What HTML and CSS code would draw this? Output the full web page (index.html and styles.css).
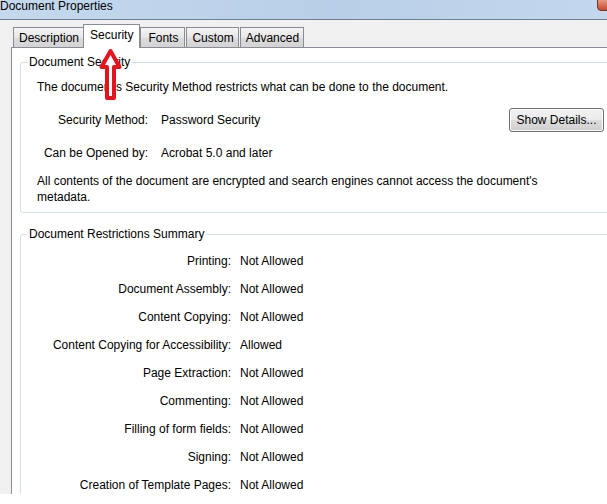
FILE: index.html
```html
<!DOCTYPE html>
<html lang="en">
<head>
    <meta charset="UTF-8">
    <meta name="viewport" content="width=device-width, initial-scale=1.0">
    <title>Document Properties</title>
    <link rel="stylesheet" href="styles.css">
</head>
<body>
    <div class="window">
        <div class="titlebar">
            Document Properties
            <span class="close"></span>
        </div>

        <div class="dialog">
            <div class="tabs">
                <span class="tab">Description</span>
                <span class="tab active">Security</span>
                <span class="tab">Fonts</span>
                <span class="tab">Custom</span>
                <span class="tab">Advanced</span>
            </div>

            <div class="panel">
                <fieldset class="group">
                    <legend>Document Security</legend>
                    <div class="group-body">
                        <p class="intro">The document's Security Method restricts what can be done to the document.</p>

                        <div class="sec-grid">
                            <span class="label">Security Method:</span>
                            <span>Password Security</span>
                            <button class="btn">Show Details...</button>

                            <span class="label">Can be Opened by:</span>
                            <span>Acrobat 5.0 and later</span>
                        </div>

                        <p class="note">All contents of the document are encrypted and search engines cannot access the document's metadata.</p>
                    </div>
                </fieldset>

                <fieldset class="group restrictions">
                    <legend>Document Restrictions Summary</legend>
                    <div class="group-body">
                        <div class="rules">
                            <span class="label">Printing:</span><span>Not Allowed</span>
                            <span class="label">Document Assembly:</span><span>Not Allowed</span>
                            <span class="label">Content Copying:</span><span>Not Allowed</span>
                            <span class="label">Content Copying for Accessibility:</span><span>Allowed</span>
                            <span class="label">Page Extraction:</span><span>Not Allowed</span>
                            <span class="label">Commenting:</span><span>Not Allowed</span>
                            <span class="label">Filling of form fields:</span><span>Not Allowed</span>
                            <span class="label">Signing:</span><span>Not Allowed</span>
                            <span class="label">Creation of Template Pages:</span><span>Not Allowed</span>
                        </div>
                    </div>
                </fieldset>
            </div>
        </div>

        <!-- red annotation arrow pointing at the Security tab -->
        <svg class="arrow" width="26" height="60" viewBox="0 0 26 60">
            <polygon points="12.5,6 21.5,22 16,22 16,53 9,53 9,22 3.5,22"
                     fill="#FFFFFF" stroke="#E3141B" stroke-width="4" stroke-linejoin="round"/>
        </svg>
    </div>
</body>
</html>
```

FILE: styles.css
```css
html {
    background-color: #FFFFFF;
}
body {
    margin: 0;
    width: 607px;
    height: 504px;
    overflow: hidden;
    font-family: "Liberation Sans", Arial, Helvetica, sans-serif;
    font-size: 12px;
    color: #000000;
}
.window {
    position: relative;
    height: 494px;
    overflow: hidden;
    background-color: #F0F0F0;
}
.titlebar {
    position: relative;
    height: 19px;
    line-height: 12px;
    border-bottom: 1px solid #6F7F8F;
    background: linear-gradient(to right, #C4D9EE, #B7CFE8 55%, #C3D8ED);
}
.close {
    position: absolute;
    top: -1px;
    right: -6px;
    width: 14px;
    height: 10px;
    border: 1px solid #7A3424;
    border-radius: 0 0 4px 4px;
    background: linear-gradient(#E59A80, #C84A2E);
}
.dialog {
    margin-right: -14px;
    padding: 4px 0 0 11px;
}
.tabs {
    display: flex;
    align-items: flex-end;
    gap: 1px;
    padding-left: 2px;
}
.tab {
    box-sizing: border-box;
    min-width: 45px;
    height: 20px;
    margin-bottom: 1px;
    padding: 0 4px 0 5px;
    line-height: 20px;
    text-align: center;
    border: 1px solid #898C95;
    border-bottom: none;
    background: linear-gradient(#F4F4F4, #E6E6E6 50%, #DCDCDC 51%, #D3D3D3);
}
.tab.active {
    position: relative;
    z-index: 1;
    height: 24px;
    margin: 0 -1px 0 -2px;
    padding: 0 6px;
    line-height: 21px;
    background: #FFFFFF;
}
.panel {
    height: 460px;
    margin-top: -1px;
    padding: 6px 8px 0 8px;
    border-top: 1px solid #898C95;
    border-left: 1px solid #898C95;
    background-color: #FFFFFF;
}
.group {
    min-width: 0;
    margin: 0;
    padding: 0 8px 7px 6px;
    border: 1px solid #D5DFE5;
    border-radius: 3px;
}
.group legend {
    padding: 0 2px;
    line-height: 16px;
}
.group-body {
    padding-left: 10px;
    line-height: 16px;
}
.intro {
    margin: 9px 0 0 0;
}
.sec-grid {
    display: grid;
    grid-template-columns: 111px 1fr auto;
    column-gap: 13px;
    row-gap: 13px;
    align-items: center;
    margin-top: 13px;
}
.label {
    text-align: right;
}
.btn {
    width: 95px;
    height: 24px;
    padding: 0;
    font-family: inherit;
    font-size: 12px;
    color: #000000;
    border: 1px solid #707070;
    border-radius: 3px;
    background: linear-gradient(#F2F2F2, #EBEBEB 50%, #DDDDDD 51%, #CFCFCF);
    box-shadow: inset 0 0 0 1px #FAFAFA;
}
.note {
    max-width: 515px;
    margin: 12px 0 0 0;
}
.restrictions {
    margin-top: 13px;
}
.rules {
    display: grid;
    grid-template-columns: 194px auto;
    column-gap: 9px;
    padding-top: 5px;
    line-height: 28px;
}
.arrow {
    position: absolute;
    left: 98px;
    top: 45px;
}
```
